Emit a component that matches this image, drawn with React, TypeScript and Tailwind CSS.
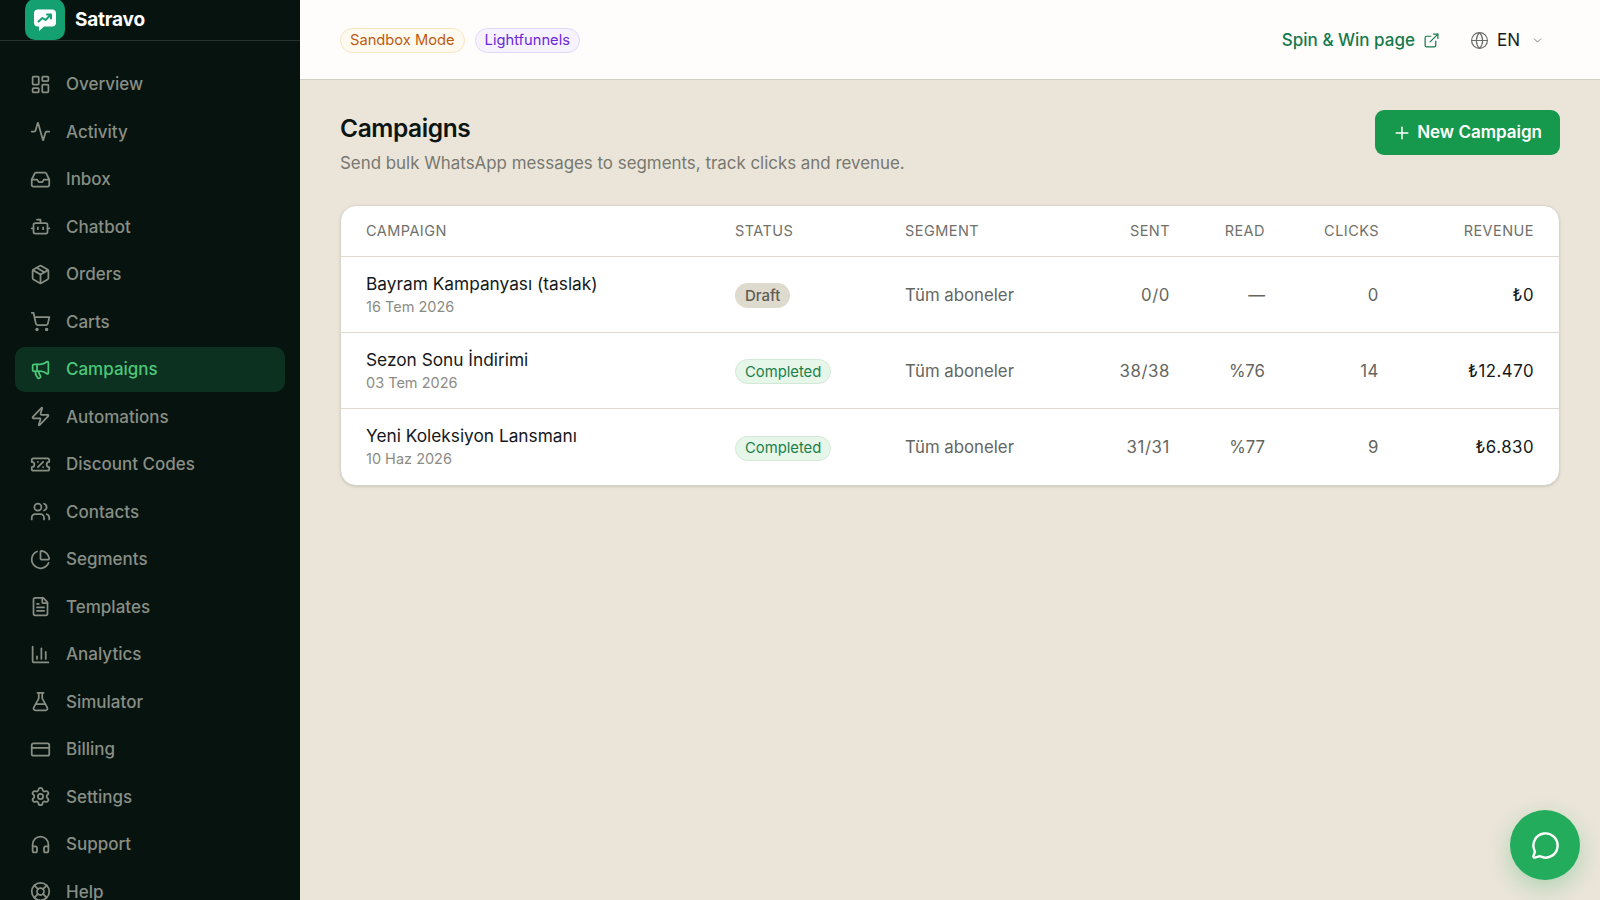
import {
  Activity,
  BarChart3,
  Bot,
  ChevronDown,
  CreditCard,
  ExternalLink,
  FileText,
  FlaskConical,
  Globe,
  Headphones,
  Inbox,
  LayoutDashboard,
  LifeBuoy,
  Megaphone,
  MessageCircle,
  Package,
  PieChart,
  Plus,
  Settings,
  ShoppingCart,
  TicketPercent,
  Users,
  Zap,
} from 'lucide-react'

const navItems = [
  { label: 'Overview', icon: LayoutDashboard },
  { label: 'Activity', icon: Activity },
  { label: 'Inbox', icon: Inbox },
  { label: 'Chatbot', icon: Bot },
  { label: 'Orders', icon: Package },
  { label: 'Carts', icon: ShoppingCart },
  { label: 'Campaigns', icon: Megaphone, active: true },
  { label: 'Automations', icon: Zap },
  { label: 'Discount Codes', icon: TicketPercent },
  { label: 'Contacts', icon: Users },
  { label: 'Segments', icon: PieChart },
  { label: 'Templates', icon: FileText },
  { label: 'Analytics', icon: BarChart3 },
  { label: 'Simulator', icon: FlaskConical },
  { label: 'Billing', icon: CreditCard },
  { label: 'Settings', icon: Settings },
  { label: 'Support', icon: Headphones },
  { label: 'Help', icon: LifeBuoy },
]

const campaigns = [
  { name: 'Bayram Kampanyası (taslak)', date: '16 Tem 2026', status: 'Draft', sent: '0/0', read: '—', clicks: '0', revenue: '₺0' },
  { name: 'Sezon Sonu İndirimi', date: '03 Tem 2026', status: 'Completed', sent: '38/38', read: '%76', clicks: '14', revenue: '₺12.470' },
  { name: 'Yeni Koleksiyon Lansmanı', date: '10 Haz 2026', status: 'Completed', sent: '31/31', read: '%77', clicks: '9', revenue: '₺6.830' },
]

function Logo() {
  return (
    <div className="flex h-[41px] w-[40px] shrink-0 items-center justify-center rounded-[10px] bg-[#14a071]">
      <svg width="26" height="26" viewBox="0 0 26 26" fill="none">
        <path d="M6 2.5h14a4 4 0 0 1 4 4v9a4 4 0 0 1-4 4h-8l-5 4.5v-4.5H6a4 4 0 0 1-4-4v-9a4 4 0 0 1 4-4z" fill="#fff" />
        <path d="M6.5 14.5l4-3.5 3 2 5-5M15 7.5h4v4" stroke="#14a071" strokeWidth="2" strokeLinecap="round" strokeLinejoin="round" />
      </svg>
    </div>
  )
}

function Sidebar() {
  return (
    <aside className="h-full w-[300px] shrink-0 overflow-hidden bg-[#06130f]">
      <div className="-mt-px flex h-[42px] items-center gap-[10px] border-b border-[#26332e] pl-[25px]">
        <Logo />
        <span className="pt-[2px] text-[19px] font-bold tracking-[-0.2px] text-white">Satravo</span>
      </div>
      <nav className="flex flex-col gap-[2.5px] px-[15px] pt-[20.5px]">
        {navItems.map(({ label, icon: Icon, active }) => (
          <div
            key={label}
            className={`flex h-[45px] shrink-0 items-center gap-[15px] rounded-[10px] px-[15px] text-[17px] font-medium ${
              active ? 'bg-[#0c3120] text-[#4cc879]' : 'text-[#898e85]'
            }`}
          >
            <Icon size={21} strokeWidth={2} className="shrink-0" />
            <span className="pt-[2px]">{label}</span>
          </div>
        ))}
      </nav>
    </aside>
  )
}

function Header() {
  return (
    <header className="flex h-[80px] shrink-0 items-center justify-between border-b border-[#d5d0c6] bg-[#fffdfc] px-[40px]">
      <div className="flex items-center gap-[10px] pt-[1px]">
        <span className="flex h-[25px] items-center rounded-full border border-[#f8e5c2] bg-[#fffaf0] px-[9px] pt-[1px] text-[14.7px] text-[#bd5a12]">
          Sandbox Mode
        </span>
        <span className="flex h-[25px] items-center rounded-full border border-[#e2d8fb] bg-[#f6f2ff] px-[9px] pt-[1px] text-[14.7px] text-[#6d28d9]">
          Lightfunnels
        </span>
      </div>
      <div className="flex items-center pt-[3px]">
        <a className="flex items-center gap-[8px] text-[17px] font-medium text-[#157a4b]">
          Spin &amp; Win page
          <ExternalLink size={17} strokeWidth={1.75} className="-mt-[2px]" />
        </a>
        <div className="ml-[30px] flex items-center text-[#1b1f1c]">
          <Globe size={19} strokeWidth={1.5} className="-mt-[2px] text-[#6a6e69]" />
          <span className="ml-[8px] text-[17px]">EN</span>
          <ChevronDown size={13} strokeWidth={1.75} className="-mt-[2px] ml-[11px] mr-[16px] text-[#7c807b]" />
        </div>
      </div>
    </header>
  )
}

function StatusBadge({ status }: { status: string }) {
  if (status === 'Draft') {
    return (
      <span className="inline-flex h-[25px] items-center rounded-full bg-[#dfdace] px-[10px] text-[15px] font-medium text-[#5f5c52]">
        {status}
      </span>
    )
  }
  return (
    <span className="inline-flex h-[25px] items-center rounded-full border border-[#d4e8d8] bg-[#e6f7e9] px-[9px] text-[14.8px] text-[#1b8049]">
      {status}
    </span>
  )
}

function CampaignTable() {
  const th = 'h-[50.5px] px-[25px] text-[14.5px] font-normal tracking-[0.45px] text-[#70716b]'
  const td = 'px-[25px] pt-[2px] text-[16.8px] text-[#65665f]'
  return (
    <div className="mt-[30px] overflow-hidden rounded-[16px] border border-[#d9d5cb] bg-white shadow-sm">
      <table className="w-full table-fixed border-collapse">
        <colgroup>
          <col className="w-[369px]" />
          <col className="w-[170px]" />
          <col className="w-[200px]" />
          <col className="w-[115px]" />
          <col className="w-[95px]" />
          <col className="w-[114px]" />
          <col className="w-[155px]" />
        </colgroup>
        <thead>
          <tr className="border-b border-[#dedad1]">
            <th className={`${th} text-left`}>CAMPAIGN</th>
            <th className={`${th} text-left`}>STATUS</th>
            <th className={`${th} text-left`}>SEGMENT</th>
            <th className={`${th} text-right`}>SENT</th>
            <th className={`${th} text-right`}>READ</th>
            <th className={`${th} text-right`}>CLICKS</th>
            <th className={`${th} text-right`}>REVENUE</th>
          </tr>
        </thead>
        <tbody>
          {campaigns.map((c, i) => (
            <tr key={c.name} className={`h-[76px] ${i < 2 ? 'border-b border-[#dedad1]' : ''}`}>
              <td className="px-[25px]">
                <div className="text-[17.3px] leading-[22px] text-[#14181a]">{c.name}</div>
                <div className="pt-[1px] text-[14.5px] leading-[21px] text-[#8b8c86]">{c.date}</div>
              </td>
              <td className="px-[25px] pt-[2px]">
                <StatusBadge status={c.status} />
              </td>
              <td className={td}>Tüm aboneler</td>
              <td className={`${td} text-right tracking-[0.6px]`}>{c.sent}</td>
              <td className={`${td} text-right`}>{c.read}</td>
              <td className={`${td} text-right tracking-[0.6px]`}>{c.clicks}</td>
              <td className="px-[25px] pt-[2px] text-right text-[16.8px] tracking-[0.5px] text-[#14181a]">{c.revenue}</td>
            </tr>
          ))}
        </tbody>
      </table>
    </div>
  )
}

export default function App() {
  return (
    <div className="flex h-screen w-full overflow-hidden bg-[#ebe5d9] font-['Inter',sans-serif]">
      <Sidebar />
      <main className="flex min-w-0 flex-1 flex-col">
        <Header />
        <div className="px-[40px] pt-[30px]">
          <div className="flex items-start justify-between">
            <div>
              <h1 className="text-[24.5px] font-semibold leading-[36px] tracking-[-0.4px] text-[#0d1512]">Campaigns</h1>
              <p className="mt-[5px] text-[16.9px] leading-[24px] text-[#777870]">
                Send bulk WhatsApp messages to segments, track clicks and revenue.
              </p>
            </div>
            <button className="flex h-[45px] items-center gap-[5px] rounded-[9px] bg-[#16994c] pl-[17px] pr-[18px] text-[17px] font-semibold text-white">
              <Plus size={20} strokeWidth={1.75} />
              <span className="pt-[1px]">New Campaign</span>
            </button>
          </div>
          <CampaignTable />
        </div>
      </main>
      <button className="absolute bottom-[20px] right-[20px] flex h-[70px] w-[70px] items-center justify-center rounded-full bg-[#22ac5b] text-white shadow-[0_8px_24px_rgba(34,172,91,0.3)]">
        <MessageCircle size={29} strokeWidth={2} />
      </button>
    </div>
  )
}
